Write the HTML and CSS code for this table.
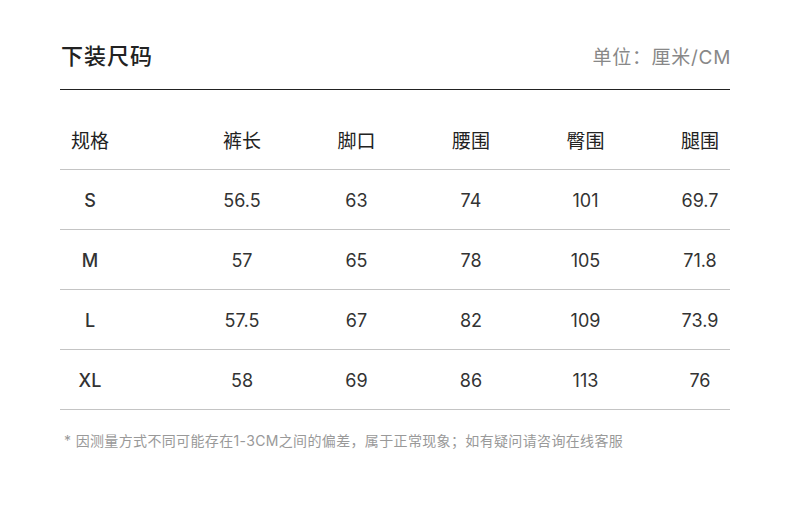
FILE: index.html
```html
<!DOCTYPE html>
<html lang="zh-CN">
<head>
<meta charset="utf-8">
<link rel="stylesheet" href="styles.css">
</head>
<body>
<div class="page">
  <div class="head">
    <h1 class="title">下装尺码</h1>
    <div class="unit">单位：厘米/CM</div>
  </div>
  <div class="table">
    <div class="row hdr">
      <div class="c first">规格</div><div class="c">裤长</div><div class="c">脚口</div><div class="c">腰围</div><div class="c">臀围</div><div class="c">腿围</div>
    </div>
    <div class="row">
      <div class="c first">S</div><div class="c">56.5</div><div class="c">63</div><div class="c">74</div><div class="c">101</div><div class="c">69.7</div>
    </div>
    <div class="row">
      <div class="c first">M</div><div class="c">57</div><div class="c">65</div><div class="c">78</div><div class="c">105</div><div class="c">71.8</div>
    </div>
    <div class="row">
      <div class="c first">L</div><div class="c">57.5</div><div class="c">67</div><div class="c">82</div><div class="c">109</div><div class="c">73.9</div>
    </div>
    <div class="row">
      <div class="c first">XL</div><div class="c">58</div><div class="c">69</div><div class="c">86</div><div class="c">113</div><div class="c">76</div>
    </div>
  </div>
  <p class="note">* 因测量方式不同可能存在1-3CM之间的偏差，属于正常现象；如有疑问请咨询在线客服</p>
</div>
</body>
</html>
```
FILE: styles.css
```css
html, body {
  margin: 0;
  padding: 0;
  background: #fff;
}
body {
  font-family: "Inter", "Noto Sans CJK SC", sans-serif;
  color: #333;
}
.page {
  width: 670px;
  padding: 0 60px;
}
.head {
  height: 90px;
  border-bottom: 1px solid #222;
  display: flex;
  justify-content: space-between;
  align-items: flex-end;
  padding-bottom: 17px;
  box-sizing: border-box;
}
.title {
  margin: 0 0 2px 1px;
  font-family: "Noto Sans CJK SC", sans-serif;
  font-size: 22px;
  line-height: 32px;
  font-weight: 500;
  color: #222;
  letter-spacing: 1px;
}
.unit {
  font-family: "Inter", "Noto Sans CJK SC", sans-serif;
  font-size: 19px;
  line-height: 28px;
  letter-spacing: 0.7px;
  margin-right: -1px;
  color: #888;
}
.row {
  display: grid;
  grid-template-columns: 97.5px repeat(5, 60px);
  column-gap: 54.5px;
  height: 60px;
  align-items: center;
  border-bottom: 1px solid #c4c4c4;
  box-sizing: border-box;
  font-size: 18px;
  color: #333;
}
.row.hdr {
  height: 80px;
  padding-top: 19px;
  font-family: "Noto Sans CJK SC", sans-serif;
  font-size: 19px;
  color: #222;
}
.c {
  text-align: center;
  white-space: nowrap;
  padding-top: 1px;
}
.first {
  padding-right: 37.5px;
}
.row:not(.hdr) .first {
  font-weight: 500;
}
.note {
  margin: 20px 0 0 4px;
  font-family: "Inter", "Noto Sans CJK SC", sans-serif;
  font-size: 14px;
  letter-spacing: 0.35px;
  color: #999;
}
```
